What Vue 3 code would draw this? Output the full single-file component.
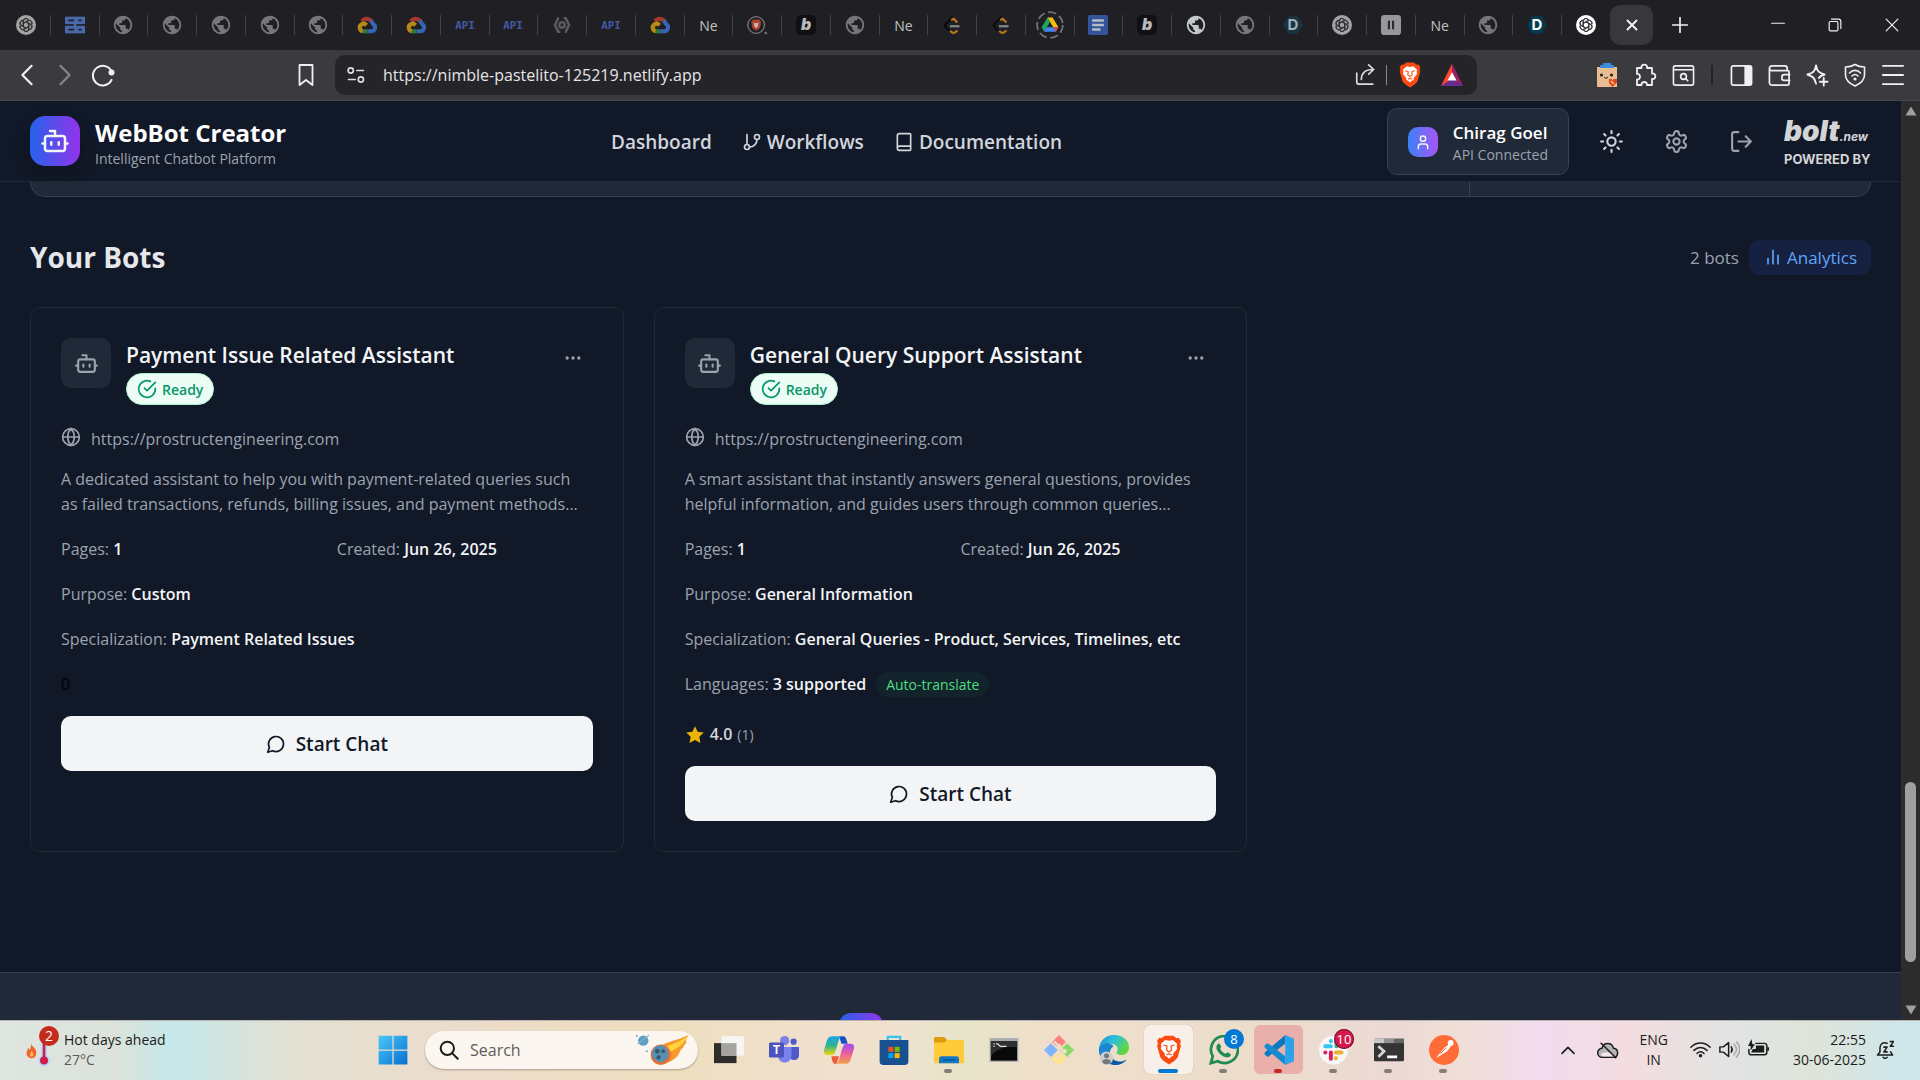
<template>
  <div class="desktop">
    <div class="tab-strip">
      <div class="tabs">
        <button v-for="(tab, i) in tabs" :key="i" class="tab" :class="{ dim: !tab.bright }" :aria-label="'Tab ' + (i + 1)">
          <span v-if="tab.text" class="tab-text">{{ tab.text }}</span>
          <Icon v-else :name="tab.icon" :size="tab.icon === 'drive' ? 28 : 20" />
        </button>
      </div>
      <button class="tab-active" aria-label="Close tab"><Icon name="close" :size="12" /></button>
      <button class="new-tab" aria-label="New tab"><Icon name="plus" :size="16" /></button>
      <div class="spacer"></div>
      <button class="win-btn" aria-label="Minimize"><Icon name="minimize" :size="14" /></button>
      <button class="win-btn" aria-label="Restore"><Icon name="restore" :size="14" /></button>
      <button class="win-btn" aria-label="Close"><Icon name="closeThin" :size="14" /></button>
    </div>

    <div class="toolbar">
      <div class="tool-left">
        <button class="tool-btn" aria-label="Back"><Icon name="back" :size="22" /></button>
        <button class="tool-btn faded" aria-label="Forward"><Icon name="forward" :size="22" /></button>
        <button class="tool-btn" aria-label="Reload"><Icon name="reload" :size="24" /></button>
        <div class="spacer"></div>
        <button class="tool-btn" aria-label="Bookmark"><Icon name="bookmark" :size="24" /></button>
      </div>
      <div class="address">
        <Icon name="tune" :size="18" />
        <input v-model="url" class="address-input" type="text" aria-label="Address" />
        <button class="addr-btn" aria-label="Share"><Icon name="share" :size="22" /></button>
        <span class="addr-divider"></span>
        <button class="addr-btn brave" aria-label="Shields"><Icon name="brave" :size="26" /></button>
        <button class="addr-btn bat" aria-label="Rewards"><Icon name="bat" :size="22" /></button>
      </div>
      <div class="tool-right">
        <button class="tool-btn" aria-label="Extension"><Icon name="cookie" :size="24" /></button>
        <button class="tool-btn" aria-label="Extensions"><Icon name="puzzle" :size="24" /></button>
        <button class="tool-btn" aria-label="Search tabs"><Icon name="pageSearch" :size="23" /></button>
        <span class="tool-divider"></span>
        <button class="tool-btn" aria-label="Sidebar"><Icon name="sidebar" :size="23" /></button>
        <button class="tool-btn" aria-label="Wallet"><Icon name="wallet" :size="23" /></button>
        <button class="tool-btn" aria-label="Leo AI"><Icon name="sparkle" :size="23" /></button>
        <button class="tool-btn" aria-label="VPN"><Icon name="vpn" :size="24" /></button>
        <button class="tool-btn" aria-label="Menu"><Icon name="menu" :size="22" /></button>
      </div>
    </div>

    <div class="viewport">
      <div class="page">
        <header class="header">
          <div class="brand">
            <div class="brand-logo"><Icon name="bot" :size="30" /></div>
            <div class="brand-text">
              <h1>WebBot Creator</h1>
              <p>Intelligent Chatbot Platform</p>
            </div>
          </div>
          <nav class="nav">
            <a href="#">Dashboard</a>
            <a href="#"><Icon name="branch" :size="20" />Workflows</a>
            <a href="#"><Icon name="book" :size="20" />Documentation</a>
          </nav>
          <div class="account">
            <div class="profile">
              <div class="avatar"><Icon name="user" :size="16" /></div>
              <div>
                <div class="profile-name">Chirag Goel</div>
                <div class="profile-status">API Connected</div>
              </div>
            </div>
            <button class="head-btn sun" aria-label="Theme"><Icon name="sun" :size="25" /></button>
            <button class="head-btn" aria-label="Settings"><Icon name="settings" :size="25" /></button>
            <button class="head-btn" aria-label="Log out"><Icon name="logout" :size="25" /></button>
            <a href="#" class="bolt">
              <span class="bolt-name">bolt<small>.new</small></span>
              <span class="bolt-by">POWERED BY</span>
            </a>
          </div>
        </header>

        <main class="main">
          <div class="panel-end"><div class="panel-body"></div><div class="panel-side"></div></div>

          <div class="section-head">
            <h2>Your Bots</h2>
            <div class="section-tools">
              <span class="count">{{ bots.length }} bots</span>
              <button class="analytics"><Icon name="bars" :size="20" />Analytics</button>
            </div>
          </div>

          <div class="bots">
            <article v-for="bot in bots" :key="bot.name" class="bot-card">
              <div class="bot-head">
                <div class="bot-icon"><Icon name="bot" :size="25" /></div>
                <div class="bot-title">
                  <h3>{{ bot.name }}</h3>
                  <span class="badge"><Icon name="check" :size="20" />Ready</span>
                </div>
                <button class="more" aria-label="More"><Icon name="dots" :size="20" /></button>
              </div>
              <div class="bot-url"><Icon name="globe" :size="20" /><a href="#">{{ bot.url }}</a></div>
              <p class="bot-desc">{{ bot.description }}</p>
              <div class="facts">
                <div>Pages: <b>{{ bot.pages }}</b></div>
                <div>Created: <b>{{ bot.created }}</b></div>
              </div>
              <div class="fact">Purpose: <b>{{ bot.purpose }}</b></div>
              <div class="fact">Specialization: <b>{{ bot.specialization }}</b></div>
              <div v-if="bot.languages" class="fact">
                Languages: <b>{{ bot.languages }} supported</b><span class="auto">Auto-translate</span>
              </div>
              <div v-if="bot.votes" class="rating">
                <Icon name="star" :size="20" /><b>{{ bot.rating }}</b><small>({{ bot.votes }})</small>
              </div>
              <div v-else class="no-votes">{{ bot.votes }}</div>
              <button class="chat-btn"><Icon name="chat" :size="20" />Start Chat</button>
            </article>
          </div>
        </main>

        <footer class="footer"><div class="footer-logo"></div></footer>
      </div>

      <div class="scrollbar">
        <Icon name="up" :size="12" />
        <div class="track-before"></div>
        <div class="thumb"></div>
        <div class="track-after"></div>
        <Icon name="down" :size="12" />
      </div>
    </div>

    <div class="taskbar">
      <button class="weather">
        <span class="weather-icon"><Icon name="heat" :size="36" /><span class="weather-badge">2</span></span>
        <span class="weather-text"><span>Hot days ahead</span><span class="temp">27°C</span></span>
      </button>
      <div class="apps">
        <button class="start" aria-label="Start"><Icon name="windows" :size="30" /></button>
        <label class="search">
          <Icon name="magnifier" :size="20" />
          <input type="text" placeholder="Search" aria-label="Search" />
          <Icon name="comet" :size="56" />
        </label>
        <button v-for="app in apps" :key="app.icon" class="app" :class="app.state" :aria-label="app.icon">
          <Icon :name="app.icon" :size="30" />
          <span v-if="app.badge" class="app-badge" :class="app.icon">{{ app.badge }}</span>
          <span v-if="app.open" class="app-open"></span>
        </button>
      </div>
      <div class="tray">
        <button aria-label="Hidden icons"><Icon name="chevronUp" :size="16" /></button>
        <button class="cloud" aria-label="OneDrive"><Icon name="cloudOff" :size="22" /></button>
        <button class="lang"><span>ENG</span><span>IN</span></button>
        <button class="status" aria-label="Network, sound and battery">
          <Icon name="wifi" :size="21" /><Icon name="volume" :size="21" /><Icon name="battery" :size="21" />
        </button>
        <button class="clock"><span>22:55</span><span>30-06-2025</span></button>
        <button aria-label="Notifications"><Icon name="bell" :size="19" /></button>
      </div>
    </div>
  </div>
</template>

<script setup>
import { h, ref } from 'vue';

const line = (body, width = 2) =>
  `<g fill="none" stroke="currentColor" stroke-width="${width}" stroke-linecap="round" stroke-linejoin="round">${body}</g>`;

const lion = `<path d="M6 2.500 8.500.5h7L18 2.500l1.800-.3 1.700 2.600-.6 1.900.6 2-2.600 9.300-2.400 2.600L12 23.500l-4.500-2.900-2.400-2.600L2.500 8.700l.6-2-.6-1.900 1.700-2.600z" fill="#fb4b12"/>
  <path d="m12 4.500 3-.6 3.600 3.300-.6 2 .6 1.700-3.500 4.300.5 1.300-2 .9L12 19l-1.600-1.600-2-.9.500-1.300-3.500-4.300.6-1.700-.6-2L9 3.900z" fill="#fff"/>
  <path d="M7.500 8l2.800.8-.3 3.200 2 1.500 2-1.500-.3-3.200 2.800-.8M10 16l2-1 2 1" fill="none" stroke="#fb4b12" stroke-width="1"/>`;

// six overlapping loops turned around the centre
const knot = (bg) => `<circle cx="12" cy="12" r="12" fill="${bg}"/>
  <g fill="none" stroke="#26262a" stroke-width="1">
    ${[0, 60, 120, 180, 240, 300].map((a) => `<path d="M9 13.500V7.500a3.300 3.300 0 0 1 6.200-1.600M9 9.500l5-2.900a3.300 3.300 0 0 1 4.600 4.400" transform="rotate(${a} 12 12)"/>`).join('')}
  </g>`;

const earth = (fill) => `<path d="M12 2C6.480 2 2 6.480 2 12s4.480 10 10 10 10-4.480 10-10S17.520 2 12 2zM4 12c0-.61.08-1.210.21-1.780L8.990 15v1c0 1.100.9 2 2 2v1.930C7.060 19.430 4 16.070 4 12zm13.890 5.400c-.26-.81-1-1.400-1.900-1.400h-1v-3c0-.55-.45-1-1-1h-6v-2h2c.55 0 1-.45 1-1V7h2c1.100 0 2-.9 2-2v-.41C17.920 5.770 20 8.650 20 12c0 2.080-.81 3.980-2.110 5.400z" fill="${fill}" transform="matrix(1.1 0 0 1.1 -1.2 -1.2)"/>`;

// every icon is drawn on a 24 x 24 grid
const icons = {
  // tab favicons
  gpt: knot('#a3a3a3'),
  gptWhite: knot('#ffffff'),
  earth: earth('#75777b'),
  earthBright: earth('#c4c7cc'),
  servers: '<g fill="#4a69ad"><rect x="0" y="2" width="24" height="9"/><rect x="0" y="13" width="24" height="9"/><path d="M10.500 10h3v4h-3z"/></g><path d="M4 6.500h7M4 17.500h7M16 6.500h4M16 17.500h4" stroke="#202024" stroke-width="2.200"/>',
  gcloud: '<g fill="none" stroke-width="5"><path d="M6 7.500a7 7 0 0 1 11-.5" stroke="#a5382f"/><path d="M16.500 6.500c2 2 1.300 3 3 4.500A4.600 4.600 0 0 1 17 19.500h-4.500" stroke="#3566b5"/><path d="M12.500 19.500H7" stroke="#2f7a43"/><path d="M7 19.500a4.500 4.500 0 0 1-1.500-8.300c2.500-1.500 4.500-.5 6 1" stroke="#b58a15"/></g>',
  hexGear: '<path d="M8.500 4h-1L3.500 12l4 8H10M15.500 20h1l4-8-4-8H14" fill="none" stroke="#5b5b5e" stroke-width="3"/><circle cx="12" cy="12" r="3.200" fill="none" stroke="#5b5b5e" stroke-width="3"/>',
  braveTab: '<circle cx="11" cy="12" r="10" fill="none" stroke="#77777a" stroke-width="1.600"/><path d="M7 5.500h8l2 3-1.500 7.500L11 19l-4.500-3L5 8.500z" fill="#a8402c"/><path d="m8 9 3 1 3-1-1 5-2 2-2-2z" fill="#c9b5b0"/><circle cx="22.500" cy="21.500" r="1.500" fill="#777"/>',
  bold: '<rect width="24" height="24" rx="6" fill="#101012"/><text x="12" y="18.500" font-family="Inter, sans-serif" font-weight="900" font-style="italic" font-size="19" fill="#b9b9bb" text-anchor="middle">b</text>',
  leet: '<path d="M13 2 4.500 10.500a3.500 3.500 0 0 0 0 4.500L8 18.500" fill="none" stroke="#0c0c0d" stroke-width="3"/><path d="m11 6 3-1.500L18.500 9M10 19c2.500 3.500 5 3 8.500-.5" fill="none" stroke="#b77818" stroke-width="2.600"/><path d="M9.500 13.500H21" stroke="#8a8a8a" stroke-width="2.600"/>',
  drive: '<circle cx="12" cy="12" r="11" fill="none" stroke="#707175" stroke-width="1.600" stroke-dasharray="7 3"/><path d="M9.800 5.500h4.400l5 8.500h-4.400z" fill="#fbbc04"/><path d="M9.800 5.500 4.800 14l2.200 3.800L12 9.300z" fill="#1ea362"/><path d="M7 17.800 9.200 14H19.200L17 17.800z" fill="#4285f4"/><path d="m15 14h4.200L17 17.800z" fill="#ea4335"/>',
  docs: '<rect y="0" width="24" height="24" rx="2" fill="#33539b"/><path d="M5 6.500h14M5 12h14M5 17.500h10" stroke="#b8bcc6" stroke-width="3"/>',
  hexD: '<path d="M6.500 1.500h11L24 12l-6.500 10.500h-11L0 12z" fill="#173443"/><text x="12" y="18.500" font-family="Inter, sans-serif" font-weight="700" font-size="18" fill="#a4adb3" text-anchor="middle">D</text>',
  hexDBright: '<path d="M6.500 1.500h11L24 12l-6.500 10.500h-11L0 12z" fill="#04394f"/><text x="12" y="18.500" font-family="Inter, sans-serif" font-weight="700" font-size="18" fill="#fff" text-anchor="middle">D</text>',
  pause: '<rect width="24" height="24" rx="4" fill="#98989a"/><path d="M9.500 7v10M14.500 7v10" stroke="#2b2b2d" stroke-width="2.600"/>',
  api: '<text x="12" y="17" font-family="DejaVu Sans Mono, monospace" font-weight="700" font-size="13" fill="#4459a8" text-anchor="middle">API</text>',

  // window and toolbar
  close: line('<path d="m3 3 18 18M21 3 3 21"/>', 4),
  closeThin: line('<path d="m2 2 20 20M22 2 2 22"/>'),
  plus: line('<path d="M12 1v22M1 12h22"/>', 2.5),
  minimize: line('<path d="M1 9h22"/>'),
  restore: line('<rect x="2" y="6" width="15" height="16" rx="2"/><path d="M6 2h12a4 4 0 0 1 4 4v12"/>'),
  back: line('<path d="M17 2 7 12l10 10"/>', 2.4),
  forward: line('<path d="m7 2 10 10L7 22"/>', 2.4),
  reload: line('<path d="M21 9.500A9.800 9.800 0 1 0 20.500 17"/>', 2) + '<circle cx="20.500" cy="9.500" r="3" fill="currentColor"/>',
  bookmark: line('<path d="M5.500 2h13v20L12 17l-6.500 5z"/>', 1.8),
  tune: line('<circle cx="5" cy="6" r="3.500"/><path d="M13 6h9M2 18h9"/><circle cx="18.500" cy="18" r="3.500"/>', 2.2),
  share: line('<path d="M3 10v9.500A2.500 2.500 0 0 0 5.500 22h15M8 17c0-7 4-11 13-11M16 1l5.500 5L16 11"/>', 1.8),
  brave: lion,
  bat: '<path d="M12 0 24 24H0z" fill="#662d91"/><path d="M12 0 0 24l8-5.500 4-8.500z" fill="#ff4724"/><path d="m12 0 12 24-8-5.500-4-8.500z" fill="#9e1f63"/><path d="m12 9 5 9H7z" fill="#fff"/>',
  cookie: '<rect x="2" y="4" width="20" height="20" fill="#e8bd91"/><path d="M8 0h8v2h3v3H5V2h3z" fill="#3b8de0"/><circle cx="6.500" cy="12" r="1.600" fill="#222"/><circle cx="16.500" cy="12" r="1.600" fill="#222"/><path d="m9 14 2 1.500 2-1.500" stroke="#222" fill="none"/><path d="M14 16h2.500l1 1.200 1-1.200H22v3.500L17.500 24 14 20z" fill="#e2412e"/><path d="m16 18 3 3" stroke="#f4b92d" stroke-width="2"/>',
  puzzle: line('<path d="M4 5h4.500c-1-4.500 6.500-4.500 5.500 0H19v5.500c4.500-1 4.500 6.500 0 5.500V22h-5c.5-4-6-4-5.500 0H4v-5.500c4 .5 4-6 0-5.500z"/>', 1.8),
  pageSearch: line('<rect x="1.500" y="2" width="21" height="20" rx="2"/><path d="M2 6h20"/><circle cx="12" cy="13" r="3"/><path d="m14.500 15.500 2 2"/>', 1.7),
  sidebar: line('<rect x="1.500" y="2" width="21" height="20" rx="2"/>', 1.8) + '<path d="M15 2h7.500v20H15z" fill="currentColor"/>',
  wallet: line('<path d="M20 7V4.500A2.500 2.500 0 0 0 17.500 2H4a2.500 2.500 0 0 0 0 5h16.500A1.500 1.500 0 0 1 22 8.500V20a2 2 0 0 1-2 2H4a2.500 2.500 0 0 1-2.500-2.500v-15M22.500 11H17a2.500 2.500 0 0 0-2.500 2.500v1A2.500 2.500 0 0 0 17 17h5.500"/>', 1.8),
  sparkle: line('<path d="M10.500 1.500c1 6 2.500 7.500 9 9.500-3.500 1-5 2-6 3.500M10.500 1.500c-1 6-3 8-9 9.500 5.500 2 7.500 3 9 9.500M18.500 14.500v8M14.500 18.500h8"/>', 2),
  vpn: line('<path d="M12 1.500c3 2 6 2.500 9.500 2.500v8c0 5-4 8.500-9.500 11-5.500-2.500-9.500-6-9.500-11V4C6 4 9 3.500 12 1.500zM6.500 10c3-3.500 8-3.500 11 0M9 13c2-2 4-2 6 0"/>', 1.6) + '<circle cx="12" cy="16" r="1.600" fill="currentColor"/>',
  menu: line('<path d="M1 2h22M1 12h22M1 22h22"/>', 2),
  up: '<path d="M12 3 23 21H1z" fill="currentColor"/>',
  down: '<path d="M12 21 1 3h22z" fill="currentColor"/>',

  // page
  bot: line('<path d="M12 8V4H8"/><rect width="16" height="12" x="4" y="8" rx="2"/><path d="M2 14h2M20 14h2M15 13v2M9 13v2"/>'),
  branch: line('<path d="M6 3v12"/><circle cx="18" cy="6" r="3"/><circle cx="6" cy="18" r="3"/><path d="M18 9a9 9 0 0 1-9 9"/>'),
  book: line('<path d="M4 19.500v-15A2.500 2.500 0 0 1 6.500 2H19a1 1 0 0 1 1 1v18a1 1 0 0 1-1 1H6.500a1 1 0 0 1 0-5H20"/>'),
  user: line('<path d="M19 22v-3a4 4 0 0 0-4-4H9a4 4 0 0 0-4 4v3"/><circle cx="12" cy="7" r="4"/>', 2.2),
  sun: line('<circle cx="12" cy="12" r="4"/><path d="M12 2v2M12 20v2M4.900 4.900l1.400 1.400M17.700 17.700l1.400 1.400M2 12h2M20 12h2M6.300 17.700l-1.400 1.400M19.100 4.900l-1.400 1.400"/>'),
  settings: line('<path d="M12.220 2h-.44a2 2 0 0 0-2 2v.18a2 2 0 0 1-1 1.730l-.43.25a2 2 0 0 1-2 0l-.15-.08a2 2 0 0 0-2.730.73l-.22.38a2 2 0 0 0 .73 2.730l.15.1a2 2 0 0 1 1 1.720v.51a2 2 0 0 1-1 1.740l-.15.09a2 2 0 0 0-.73 2.730l.22.38a2 2 0 0 0 2.730.73l.15-.08a2 2 0 0 1 2 0l.43.25a2 2 0 0 1 1 1.730V20a2 2 0 0 0 2 2h.44a2 2 0 0 0 2-2v-.18a2 2 0 0 1 1-1.730l.43-.25a2 2 0 0 1 2 0l.15.08a2 2 0 0 0 2.730-.73l.22-.39a2 2 0 0 0-.73-2.730l-.15-.08a2 2 0 0 1-1-1.740v-.5a2 2 0 0 1 1-1.740l.15-.09a2 2 0 0 0 .73-2.730l-.22-.38a2 2 0 0 0-2.730-.73l-.15.08a2 2 0 0 1-2 0l-.43-.25a2 2 0 0 1-1-1.730V4a2 2 0 0 0-2-2z"/><circle cx="12" cy="12" r="3"/>'),
  logout: line('<path d="M9 21H5a2 2 0 0 1-2-2V5a2 2 0 0 1 2-2h4M16 17l5-5-5-5M21 12H9"/>'),
  bars: line('<path d="M18 20V10M12 20V4M6 20v-6"/>'),
  check: line('<path d="M22 11.080V12a10 10 0 1 1-5.930-9.140"/><path d="m9 11 3 3L22 4"/>'),
  dots: line('<circle cx="12" cy="12" r="1"/><circle cx="19" cy="12" r="1"/><circle cx="5" cy="12" r="1"/>'),
  globe: line('<circle cx="12" cy="12" r="10"/><path d="M12 2a14.500 14.500 0 0 0 0 20 14.500 14.500 0 0 0 0-20M2 12h20"/>'),
  chat: line('<path d="M7.900 20A9 9 0 1 0 4 16.100L2 22Z"/>'),
  star: '<path d="m12 1.500 3.200 6.600 7.300 1-5.300 5.100 1.300 7.300L12 18l-6.500 3.500 1.300-7.300L1.500 9.100l7.300-1z" fill="#eab308"/>',

  // taskbar
  heat: '<path d="M4 8c1 2 4 3 3.500 6.500-.3 2-1.500 3-3 3S1 16.500 1 14c0-1.500 1-2 1-3.500.7.500 1 1 1 1.500C4 11 4 9.500 4 8z" fill="#f0642f"/><path d="M4.300 12.500c.7 1.200 1.500 2 1.200 3.200-.3 1-1.700 1-2 0-.3-1 .5-1.800.8-3.200z" fill="#ffc04d"/><path d="M10.500 6a2.200 2.200 0 0 1 4.400 0v9.800a4 4 0 1 1-4.400 0z" fill="#bcd9f7"/><path d="M12.700 7v11" stroke="#cc1f4d" stroke-width="1.800"/><circle cx="12.700" cy="19" r="2.700" fill="#cc1f4d"/>',
  windows: '<defs><linearGradient id="win" x1="0" y1="0" x2="1" y2="1"><stop stop-color="#4cc8fa"/><stop offset="1" stop-color="#0570d0"/></linearGradient></defs><path d="M.5.500h11v11H.5zM12.500.500h11v11h-11zM.5 12.500h11v11H.5zM12.500 12.500h11v11h-11z" fill="url(#win)"/>',
  magnifier: line('<circle cx="10" cy="10" r="8"/><path d="m16 16 6.500 6.500"/>', 2.4),
  comet: '<path d="M9.500 12.500c3-4.500 7-3.500 14-7-1 1.700-1.500 2-1 3.500-1.500 1-1 2-2.500 3-1 3-4 5.500-7 5.500z" fill="#f79a2c"/><path d="M12 11.500c4-2 7-2.500 11-5.500-2 4-4 5-8 7z" fill="#ffd43d"/><circle cx="11.500" cy="14" r="4.400" fill="#ea6f35"/><circle cx="11.300" cy="13.600" r="3.600" fill="#5b8fb0"/><circle cx="10" cy="12.500" r="1" fill="#31566f"/><circle cx="12.500" cy="12.500" r=".8" fill="#31566f"/><circle cx="10.500" cy="15.200" r=".9" fill="#31566f"/><circle cx="4" cy="8" r="2.200" fill="#5d9fc4"/><path d="m1.500 9.500 5-4" stroke="#80b5cc" stroke-width=".5"/><circle cx="1.200" cy="6" r=".4" fill="#5d9fc4"/><circle cx="5.500" cy="12.500" r=".4" fill="#5d9fc4"/>',
  taskView: '<rect x="0" y="6.500" width="18" height="16" fill="#2e2d2b"/><rect x="6" y="1" width="18" height="15.500" fill="#f5f5f5"/><path d="M6 6.500h12v10H6z" fill="#a4a3a1"/>',
  teams: '<circle cx="12.500" cy="4.500" r="3.700" fill="#7b83eb"/><circle cx="19.700" cy="5.300" r="2.500" fill="#5059c9"/><path d="M17 9.500h7v6.500c0 4-4 5-7 3z" fill="#5059c9"/><path d="M7 9.500h11v6.500c0 8-11 8-11 0z" fill="#7b83eb"/><rect y="6" width="12" height="12" rx="1" fill="#4b53bc"/><text x="6" y="15" font-family="Inter, sans-serif" font-weight="700" font-size="9" fill="#fff" text-anchor="middle">T</text>',
  copilot: '<defs><linearGradient id="cpa" x1="0" y1="0" x2="0" y2="1"><stop stop-color="#1aa4e8"/><stop offset=".5" stop-color="#2fb38e"/><stop offset="1" stop-color="#f3d70b"/></linearGradient><linearGradient id="cpb" x1="0" y1="0" x2="0" y2="1"><stop stop-color="#a34bf0"/><stop offset=".5" stop-color="#ec5f9e"/><stop offset="1" stop-color="#f5a04c"/></linearGradient></defs><path d="M12 1h3c2 0 2.500 1 3 3l1 3h-5z" fill="#1752c4"/><path d="M7 1h7c-3 1-3.500 13-7 15H3c-2.500 0-3.500-1.500-3-4L2.500 4C3.300 2 4.500 1 7 1z" fill="url(#cpa)"/><path d="M6 17h6l-2 6c-2.500.5-3.500-1-4-6z" fill="#ee5c37"/><path d="M17 23h-7c3-1 3.500-14 7-16h4c2.500 0 3.500 1.500 3 4l-2.500 8C20.700 22 19.500 23 17 23z" fill="url(#cpb)"/>',
  store: '<path d="M7 5V1.500h10V5" fill="none" stroke="#35c3f2" stroke-width="1.800"/><path d="M.5 4h23v17a3 3 0 0 1-3 3h-17a3 3 0 0 1-3-3z" fill="#17518f"/><path d="M7.500 9.500h4v4h-4z" fill="#f25022"/><path d="M12.500 9.500h4v4h-4z" fill="#7fba00"/><path d="M7.500 14.500h4v4h-4z" fill="#00a4ef"/><path d="M12.500 14.500h4v4h-4z" fill="#ffb900"/>',
  explorer: '<path d="M0 2.500A1 1 0 0 1 1 1.500h7l2.500 2.500H24v6H0z" fill="#dd9c0b"/><path d="M0 6h8l2.500-2H24v18.500H0z" fill="#ffcb38"/><path d="M4 22.500V19a2 2 0 0 1 2-2h12a2 2 0 0 1 2 2v3.500z" fill="#1279c7"/><path d="M7 20h10" stroke="#0b4f8c"/>',
  cmd: '<rect x=".5" y="2.500" width="23" height="19" fill="#a9acb0"/><rect x="1.500" y="5" width="21" height="15.500" fill="#0a0a0a"/><path d="M1.500 5h21v5c-8-1-16 0-21 7z" fill="#303030"/><path d="M3.500 7h1M3.500 9h1M5.500 7h1.500l2 2h5" stroke="#ddd" fill="none"/>',
  git: '<path d="m12 0 5.500 5.500L12 11 6.500 5.500z" fill="#ff8080"/><path d="M5.500 6.500 11 12l-5.500 5.500L0 12z" fill="#80b3ff"/><path d="M18.500 6.500 24 12l-5.500 5.500L13 12z" fill="#8cd866"/><path d="m12 13 5.500 5.500L12 24l-5.500-5.500z" fill="#ffe680"/><path d="m8 5 4 4v9M12 9l4 4" fill="none" stroke="#f0e0cb" stroke-width="1.800"/><circle cx="12" cy="9" r="1.800" fill="#f0e0cb"/><circle cx="12" cy="18" r="1.800" fill="#f0e0cb"/><circle cx="16.500" cy="13" r="1.800" fill="#f0e0cb"/>',
  edge: '<defs><linearGradient id="edge" x1="0" y1="0" x2="1" y2=".5"><stop stop-color="#1b8fd6"/><stop offset=".5" stop-color="#2cc0dc"/><stop offset="1" stop-color="#62d63d"/></linearGradient></defs><path d="M0 12C0 5 5 0 12 0c8 0 12 5 12 10 0 4-3 6-6 6-3.500 0-4.500-1.500-3.500-3 1.500-3-1-6-5-6-5 0-9 3-9.500 5z" fill="url(#edge)"/><path d="M0 12c1-5 8-7 11.500-3C8 11 8 16 11 19c3 3 8 2.500 11 .5C19 24 14 24.500 10 23.500 4 22 0 17 0 12z" fill="#0d5aa7"/><path d="M0 12c1-5 8-7 11.500-3C8 11 7.500 15 10 19l-6 2C1 18 0 15 0 12z" fill="#1c86d1"/><circle cx="6" cy="18.500" r="5.300" fill="#cfcfcf"/><circle cx="6" cy="16.500" r="2" fill="#777"/><path d="M2.500 21.500c1-3 6-3 7 0-1.500 2.500-5.500 2.500-7 0z" fill="#777"/>',
  whatsapp: '<path d="M1.500 22.500 3 17A10.800 10.800 0 1 1 7 21z" fill="none" stroke="#208a55" stroke-width="2.200"/><path d="M8 6.500 9.800 9 9 11c1 2 2 3 4 4l2-1.200 2.700 1.700c-1 3-4 3-7 1-3-1.800-5.200-5-4.700-7.500C6.200 7.800 7 7 8 6.500z" fill="#208a55"/>',
  vscode: '<path d="M17 0v7L3 17.500.500 15.500v-1.500z" fill="#0c78be"/><path d="M17 24v-7L3 6.500.500 8v2z" fill="#168bd0"/><path d="m17 0 7 3v18l-7 3z" fill="#2ba3ec"/>',
  slack: '<circle cx="11.500" cy="12" r="11.500" fill="#f7f7f7"/><g stroke-width="3.200" stroke-linecap="round"><path d="M5 9h4.500M9.500 4.800v.1" stroke="#36c5f0"/><path d="M14 5v4M18 9h.1" stroke="#2eb67d"/><path d="M13.500 14H18M13.500 18.500v.1" stroke="#ecb22e"/><path d="M9.500 14v5M5 14h.1" stroke="#e01e5a"/></g>',
  terminal: '<rect x="0" y="3" width="24" height="18" rx="1" fill="#343434"/><path d="M0 3h8v3.500H0z" fill="#c7c7c7"/><path d="M8 3h8v3.500H8z" fill="#919191"/><path d="M16 3h8v3.500h-8z" fill="#666"/><path d="m3.500 9 4.500 4-4.500 4.500" fill="none" stroke="#d6d6d6" stroke-width="2.200"/><path d="M10.500 17.500h8" stroke="#fff" stroke-width="2.200"/>',
  postman: '<circle cx="12" cy="12" r="12" fill="#ff6c37"/><path d="m5.500 18.500 7-8.500 3.500-2.500 1.500 1.500-3 4z" fill="#fff"/><circle cx="17.300" cy="6.300" r="2.300" fill="#fff"/><path d="m9 15 5-5" stroke="#ff6c37" stroke-width=".8"/>',
  chevronUp: line('<path d="m3 17 9-9 9 9"/>', 2.4),
  cloudOff: '<path d="M6 20a5 5 0 0 1-.5-10C7 3.500 16 3 18 10c6 .5 6 10 0 10z" fill="#b5b5b5" stroke="#1c1c1c" stroke-width="1.600"/><path d="M4 17c4-4 11-3 15 2H6z" fill="#f1e8ea"/><path d="m4 4 17 17" stroke="#1c1c1c" stroke-width="1.600"/>',
  wifi: line('<path d="M1 9.500c6.500-6.500 15.500-6.500 22 0M4.500 13c4.500-4.500 10.500-4.500 15 0M8 16.500c2.500-2.500 5.500-2.500 8 0"/>', 1.7) + '<circle cx="12" cy="19" r="2" fill="currentColor"/>',
  volume: line('<path d="M1 9h4l6-5v16l-6-5H1zM14 9c1.500 2 1.500 4 0 6"/>', 1.7) + '<g opacity=".3">' + line('<path d="M17 6c4 4 4 8 0 12M20 3.500c5 5 5 12 0 17"/>', 1.7) + '</g>',
  battery: line('<path d="M9 5h10a2.500 2.500 0 0 1 2.500 2.500v8A2.500 2.500 0 0 1 19 18H3.500A2.500 2.500 0 0 1 1 15.500V12"/>', 1.7) + '<path d="M9 7.500h9.500v8h-15l2-4H9zM22 9.500h2v4h-2zM4 0 0 8h3v5l5-7H5z" fill="currentColor"/>',
  bell: line('<path d="M14 4c-6-2-9 2-9 6v5l-3 4h19l-2.500-4M9 22c1 1.500 4 1.500 5 0M10 9h4l-4 6h4M18 2h4l-4 6h4"/>', 1.9),
};

const Icon = (props) =>
  h('svg', { viewBox: '0 0 24 24', width: props.size, height: props.size, 'aria-hidden': 'true', innerHTML: icons[props.name] });
Icon.props = ['name', 'size'];

const url = ref('https://nimble-pastelito-125219.netlify.app');

const bright = ['gptWhite', 'earthBright', 'hexDBright'];
const tabs = [
  'gpt', 'servers', 'earth', 'earth', 'earth', 'earth', 'earth', 'gcloud', 'gcloud', 'api', 'api', 'hexGear', 'api',
  'gcloud', 'Ne', 'braveTab', 'bold', 'earth', 'Ne', 'leet', 'leet', 'drive', 'docs', 'bold', 'earthBright', 'earth',
  'hexD', 'gpt', 'pause', 'Ne', 'earth', 'hexDBright', 'gptWhite',
].map((name) => (name === 'Ne' ? { text: name } : { icon: name, bright: bright.includes(name) }));

const bots = [
  {
    name: 'Payment Issue Related Assistant',
    url: 'https://prostructengineering.com',
    description: 'A dedicated assistant to help you with payment-related queries such as failed transactions, refunds, billing issues, and payment methods...',
    pages: 1,
    created: 'Jun 26, 2025',
    purpose: 'Custom',
    specialization: 'Payment Related Issues',
    votes: 0,
  },
  {
    name: 'General Query Support Assistant',
    url: 'https://prostructengineering.com',
    description: 'A smart assistant that instantly answers general questions, provides helpful information, and guides users through common queries...',
    pages: 1,
    created: 'Jun 26, 2025',
    purpose: 'General Information',
    specialization: 'General Queries - Product, Services, Timelines, etc',
    languages: 3,
    rating: '4.0',
    votes: 1,
  },
];

const apps = [
  { icon: 'taskView' },
  { icon: 'teams' },
  { icon: 'copilot' },
  { icon: 'store' },
  { icon: 'explorer', open: true },
  { icon: 'cmd' },
  { icon: 'git' },
  { icon: 'edge' },
  { icon: 'brave', open: true, state: 'active' },
  { icon: 'whatsapp', open: true, badge: 8 },
  { icon: 'vscode', open: true, state: 'alert' },
  { icon: 'slack', open: true, badge: 10 },
  { icon: 'terminal', open: true },
  { icon: 'postman', open: true },
];
</script>

<style>
body {
  margin: 0;
  background: #111827;
}
</style>

<style scoped>
* {
  box-sizing: border-box;
}
.desktop {
  display: flex;
  flex-direction: column;
  height: 100vh;
  overflow: hidden;
  font-family: "Open Sans", "Noto Sans", sans-serif;
  font-size: 16px;
}
button,
input {
  font: inherit;
  color: inherit;
  background: none;
  border: none;
  padding: 0;
}
button {
  cursor: pointer;
  display: flex;
  align-items: center;
  justify-content: center;
}
svg {
  flex: none;
}
h1,
h2,
h3,
p {
  margin: 0;
}
a {
  color: inherit;
  text-decoration: none;
}
b {
  font-weight: 600;
}
.spacer {
  flex: 1;
}

/* browser chrome */
.tab-strip {
  display: flex;
  align-items: center;
  height: 50px;
  background: #202024;
  color: #f1f1f3;
}
.tabs {
  display: flex;
  flex: 1;
  padding-left: 2px;
}
.tab {
  flex: 1 1 0;
  min-width: 0;
  height: 20px;
  border-right: 1px solid #414146;
}
.tab:last-child {
  border-right: none;
}
.tab.dim {
  color: #c0c0c2;
}
.tab-text {
  font-size: 14px;
}
.tab-active {
  width: 43px;
  height: 40px;
  border-radius: 10px;
  background: #38373c;
}
.new-tab {
  width: 54px;
  height: 40px;
}
.tab-strip .spacer {
  flex: 0 1 42px;
}
.win-btn {
  width: 57px;
  height: 50px;
}
.toolbar {
  display: flex;
  align-items: center;
  height: 51px;
  background: #3b3a3f;
  border-bottom: 1px solid #46464a;
  color: #f0f0f2;
}
.tool-left {
  display: flex;
  align-items: center;
  width: 335px;
  padding: 0 10px 0 8px;
}
.tool-btn {
  width: 38px;
  height: 38px;
}
.faded {
  color: #87878b;
}
.address {
  display: flex;
  align-items: center;
  flex: 1;
  height: 40px;
  padding: 0 10px 0 12px;
  border-radius: 10px;
  background: #252428;
  color: #dddde0;
}
.address-input {
  flex: 1;
  margin-left: 18px;
  font-size: 16px;
  color: #e6e6e9;
}
.addr-btn {
  width: 30px;
  height: 30px;
}
.addr-divider {
  width: 1px;
  height: 20px;
  margin: 0 8px 0 6px;
  background: #88888c;
}
.bat {
  margin-left: 12px;
}
.tool-right {
  display: flex;
  align-items: center;
  justify-content: flex-end;
  width: 443px;
  padding-right: 8px;
}
.tool-divider {
  width: 2px;
  height: 20px;
  margin: 0 9px;
  background: #222226;
}

/* page */
.viewport {
  display: flex;
  flex: 1;
  min-height: 0;
}
.page {
  display: flex;
  flex-direction: column;
  flex: 1;
  overflow: hidden;
  background: #111827;
  color: #f3f4f6;
}
.header {
  display: flex;
  align-items: center;
  justify-content: space-between;
  flex: none;
  height: 81px;
  padding: 0 30px;
  border-bottom: 1px solid #1f2937;
}
.brand,
.account {
  display: flex;
  align-items: center;
}
.brand {
  gap: 15px;
}
.brand-logo {
  display: flex;
  align-items: center;
  justify-content: center;
  width: 50px;
  height: 50px;
  border-radius: 15px;
  background: linear-gradient(90deg, #2563eb, #9333ea);
  box-shadow: 0 8px 16px rgba(0, 0, 0, 0.2);
}
.brand-text {
  padding-top: 4px;
}
.brand h1 {
  font-size: 24px;
  font-weight: 700;
  line-height: 32px;
  color: #fff;
}
.brand p {
  font-size: 14px;
  line-height: 20px;
  color: #9ca3af;
}
.nav {
  display: flex;
  gap: 30px;
  padding-top: 2px;
  font-size: 19px;
  font-weight: 600;
  color: #d1d5db;
}
.nav a {
  display: flex;
  align-items: center;
  gap: 5px;
}
.profile {
  display: flex;
  align-items: center;
  gap: 15px;
  padding: 11px 20px 9px;
  margin-right: 30px;
  border: 1px solid #374151;
  border-radius: 10px;
  background: #1f2937;
}
.avatar {
  display: flex;
  align-items: center;
  justify-content: center;
  width: 30px;
  height: 30px;
  border-radius: 10px;
  background: linear-gradient(90deg, #3b82f6, #a855f7);
}
.profile-name {
  font-size: 17px;
  font-weight: 600;
  line-height: 25px;
  color: #fff;
}
.profile-status {
  font-size: 14px;
  line-height: 20px;
  color: #9ca3af;
}
.head-btn {
  margin-right: 40px;
  color: #9ca3af;
}
.head-btn.sun {
  color: #d1d5db;
}
.bolt {
  display: flex;
  flex-direction: column;
  width: 87px;
  margin-left: -10px;
  font-family: Inter, sans-serif;
  color: #d3d4d6;
}
.bolt-name {
  font-size: 28px;
  font-weight: 900;
  font-style: italic;
  line-height: 30px;
  white-space: nowrap;
}
.bolt-name small {
  font-size: 12px;
  font-weight: 700;
}
.bolt-by {
  font-size: 13px;
  font-weight: 700;
  line-height: 14px;
  white-space: nowrap;
}
.main {
  padding: 0 30px 120px;
}
.panel-end {
  display: flex;
  height: 15px;
  border: 1px solid #374151;
  border-top: none;
  border-radius: 0 0 15px 15px;
  background: #1f2937;
}
.panel-body {
  flex: 1;
  border-right: 1px solid #374151;
}
.panel-side {
  width: 400px;
}
.section-head {
  display: flex;
  align-items: center;
  justify-content: space-between;
  padding: 40px 0 30px;
}
.section-head h2 {
  font-size: 28px;
  font-weight: 700;
  line-height: 40px;
  color: #e5e7eb;
}
.section-tools {
  display: flex;
  align-items: center;
  gap: 10px;
  font-size: 17px;
}
.count {
  color: #9ca3af;
}
.analytics {
  gap: 4px;
  height: 35px;
  padding: 0 14px;
  border-radius: 10px;
  background: #162040;
  color: #60a5fa;
}
.bots {
  display: grid;
  grid-template-columns: repeat(3, 1fr);
  gap: 30px;
}
.bot-card {
  display: flex;
  flex-direction: column;
  padding: 30px;
  border: 1px solid #1f2937;
  border-radius: 10px;
}
.bot-head {
  display: flex;
  align-items: flex-start;
  gap: 15px;
}
.bot-icon {
  display: flex;
  align-items: center;
  justify-content: center;
  width: 50px;
  height: 50px;
  border-radius: 10px;
  background: #1f2937;
  color: #9ca3af;
}
.bot-title {
  flex: 1;
}
.bot-title h3 {
  font-size: 21px;
  font-weight: 600;
  line-height: 35px;
  color: #f3f4f6;
}
.badge {
  display: inline-flex;
  align-items: center;
  gap: 5px;
  height: 32px;
  padding: 0 10px;
  border: 1px solid #a7f3d0;
  border-radius: 16px;
  background: #ecfdf5;
  color: #059669;
  font-size: 14px;
  font-weight: 600;
  vertical-align: top;
}
.more {
  width: 40px;
  height: 40px;
  color: #9ca3af;
}
.bot-url {
  display: flex;
  align-items: flex-start;
  gap: 10px;
  margin-top: 22px;
  line-height: 25px;
  color: #9ca3af;
}
.bot-desc {
  margin-top: 15px;
  padding-right: 8px;
  line-height: 25px;
  color: #9ca3af;
}
.facts {
  display: grid;
  grid-template-columns: 1fr 1fr;
  gap: 20px;
  margin-top: 20px;
  line-height: 25px;
  color: #9ca3af;
}
.fact {
  margin-top: 20px;
  line-height: 25px;
  color: #9ca3af;
}
.facts b,
.fact b {
  color: #f3f4f6;
}
.auto {
  display: inline-block;
  padding: 0 10px;
  margin-left: 10px;
  border-radius: 13px;
  background: #12232b;
  color: #4ade80;
  font-size: 14px;
}
.rating {
  display: flex;
  align-items: center;
  gap: 5px;
  margin-top: 25px;
  line-height: 25px;
}
.rating b {
  color: #d1d5db;
}
.rating small {
  font-size: 14px;
  color: #9ca3af;
}
.no-votes {
  margin-top: 20px;
  line-height: 25px;
  color: #000;
}
.chat-btn {
  gap: 10px;
  height: 55px;
  margin-top: 19px;
  border-radius: 10px;
  background: #f3f4f6;
  color: #111827;
  font-size: 19px;
  font-weight: 600;
}
.footer {
  display: flex;
  justify-content: center;
  flex: 1;
  padding: 40px 180px 0 0;
  border-top: 1px solid #374151;
  background: #1f2937;
}
.footer-logo {
  width: 44px;
  height: 44px;
  border-radius: 12px;
  background: linear-gradient(90deg, #2563eb, #9333ea);
}
.scrollbar {
  display: flex;
  flex-direction: column;
  align-items: center;
  width: 19px;
  padding: 4px 0;
  background: #2c2c2c;
  color: #9f9f9f;
}
.track-before {
  flex: 16;
}
.track-after {
  flex: 1;
}
.thumb {
  width: 11px;
  height: 180px;
  border-radius: 6px;
  background: #9f9f9f;
}

/* taskbar */
.taskbar {
  display: flex;
  flex: none;
  height: 60px;
  padding-bottom: 2px;
  border-top: 1px solid #b9b5ae;
  background: linear-gradient(90deg, #dfe5df 0%, #dbe3db 6%, #c5e7ea 9%, #c8e6e6 10%, #e3e1d3 15%, #ecdccb 24%, #eedfbf 35%, #f0dfcb 42%, #f0e2cf 47%, #e6e4c9 50%, #efdfca 54%, #ecddcb 65%, #ecd9d5 73%, #f0dfd6 76%, #f2dcef 80%, #f3dde0 85%, #dfe4e2 91%, #dfe3d9 94%, #cce7ed 100%);
  color: #1c1c1c;
  font-size: 14px;
}
.weather {
  width: 370px;
  gap: 6px;
  justify-content: flex-start;
  padding-left: 25px;
}
.weather-icon {
  position: relative;
  display: flex;
  width: 33px;
}
.weather-badge {
  position: absolute;
  top: -6px;
  right: -1px;
  width: 20px;
  height: 20px;
  border-radius: 10px;
  background: #c42b1c;
  color: #fff;
  line-height: 20px;
  text-align: center;
}
.weather-text {
  display: flex;
  flex-direction: column;
  line-height: 20px;
  text-align: left;
}
.temp {
  color: #5b5b58;
}
.apps {
  display: flex;
  align-items: center;
}
.start {
  width: 45px;
  height: 48px;
}
.search {
  display: flex;
  align-items: center;
  width: 273px;
  height: 38px;
  margin: 0 3px 0 10px;
  padding: 0 8px 0 14px;
  border-radius: 19px;
  background: #fbf6f0;
  box-shadow: 0 1px 2px rgba(0, 0, 0, 0.3);
}
.search input {
  flex: 1;
  min-width: 0;
  margin-left: 11px;
  font-size: 16px;
}
.search input::placeholder {
  color: #5f5d5b;
}
.app {
  position: relative;
  width: 49px;
  height: 49px;
  margin: 0 3px;
  border-radius: 6px;
}
.app.active {
  background: #f8f0e8;
  box-shadow: 0 0 1px rgba(0, 0, 0, 0.3);
}
.app.alert {
  background: #e9b0ab;
}
.app-open {
  position: absolute;
  bottom: 1px;
  left: 20px;
  width: 8px;
  height: 4px;
  border-radius: 2px;
  background: #857e77;
}
.active .app-open {
  left: 14px;
  width: 20px;
  background: #0078d4;
}
.alert .app-open {
  background: #c42b1c;
}
.app-badge {
  position: absolute;
  top: 4px;
  right: 4px;
  width: 20px;
  height: 20px;
  border-radius: 10px;
  background: #0078d4;
  color: #fff;
  font-size: 13px;
  line-height: 20px;
  text-align: center;
}
.app-badge.slack {
  background: #d8174f;
  box-shadow: inset 0 0 0 1px #6b1a33;
}
.tray {
  display: flex;
  align-items: center;
  justify-content: flex-end;
  flex: 1;
  padding-right: 25px;
}
.cloud {
  margin: 0 20px 0 21px;
}
.lang {
  flex-direction: column;
  line-height: 20px;
}
.status {
  gap: 8px;
  margin: 0 24px 0 22px;
}
.clock {
  flex-direction: column;
  align-items: flex-end;
  margin-right: 10px;
  line-height: 20px;
}
</style>
